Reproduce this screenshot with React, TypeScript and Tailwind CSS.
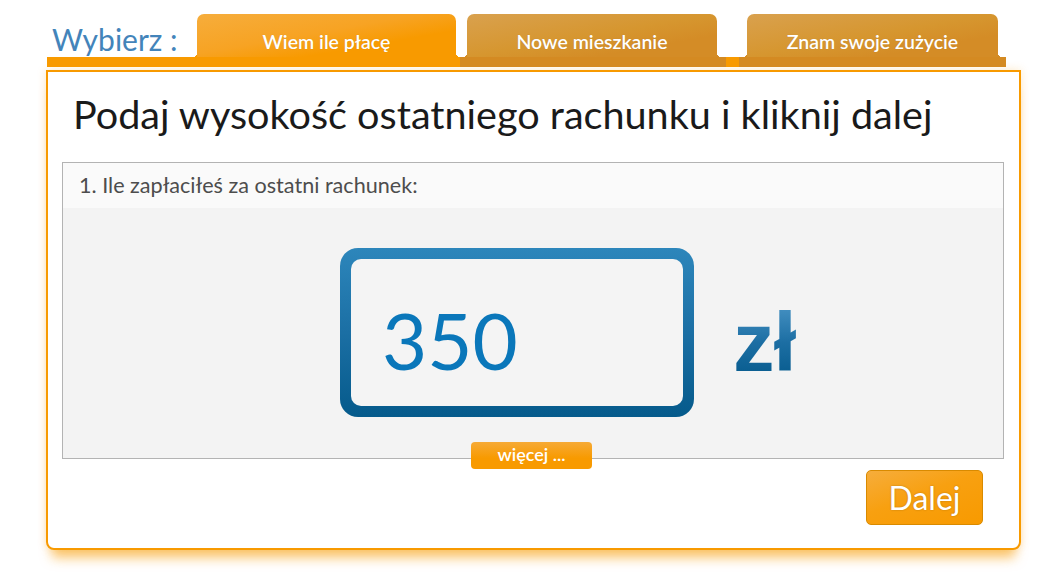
import React from "react";

const tabs = [
  { label: "Wiem ile płacę", active: true, width: "w-[259px]" },
  { label: "Nowe mieszkanie", active: false, width: "w-[250px]" },
  { label: "Znam swoje zużycie", active: false, width: "w-[251px]" },
];

function Tab({ label, active, width }: { label: string; active: boolean; width: string }) {
  return (
    <div
      className={`relative h-[43px] ${width} rounded-t-[7px] flex items-center justify-center text-white text-[19.5px] font-semibold ${
        active
          ? "bg-[linear-gradient(170deg,#f6ad3c_0%,#f7a323_45%,#f89a00_70%)]"
          : "bg-[linear-gradient(170deg,#d9a14e_0%,#d6962f_50%,#d48c26_75%)]"
      }`}
    >
      <span className="mt-[12px] [text-shadow:0_0_1px_rgba(0,0,0,0.15)]">{label}</span>
      {/* bottom flares */}
      <span
        className={`absolute bottom-0 left-[-4px] w-[4px] h-[4px] ${
          active
            ? "bg-[radial-gradient(circle_at_0_0,transparent_4px,#f89a00_4px)]"
            : "bg-[radial-gradient(circle_at_0_0,transparent_4px,#d48c26_4px)]"
        }`}
      />
      <span
        className={`absolute bottom-0 right-[-4px] w-[4px] h-[4px] ${
          active
            ? "bg-[radial-gradient(circle_at_100%_0,transparent_4px,#f89a00_4px)]"
            : "bg-[radial-gradient(circle_at_100%_0,transparent_4px,#d48c26_4px)]"
        }`}
      />
    </div>
  );
}

export default function App() {
  return (
    <div className="w-[1051px] h-[578px] bg-white overflow-hidden font-['Lato','Liberation_Sans',sans-serif]">
      {/* Tabs header */}
      <div className="pt-[14px] pl-[47px] flex items-end">
        <div className="w-[150px] h-[43px] pl-[5px] text-[30px] leading-none text-[#4384ba] flex items-end pb-[3px]">
          Wybierz :
        </div>
        <Tab {...tabs[0]} />
        <div className="w-[11px]" />
        <Tab {...tabs[1]} />
        <div className="w-[30px]" />
        <Tab {...tabs[2]} />
      </div>
      <div className="ml-[47px] flex h-[10px]">
        <div className="w-[413px] bg-[#f89a00]" />
        <div className="w-[266px] bg-[#d48a22]" />
        <div className="w-[13px] bg-[#f89a00]" />
        <div className="w-[267px] bg-[#d48a22]" />
      </div>

      {/* Main panel */}
      <div className="mt-[3px] ml-[46px] w-[975px] h-[480px] border-2 border-[#f89a00] rounded-b-[8px] bg-white shadow-[0_14px_12px_-6px_rgba(248,154,0,0.55),0_0_10px_rgba(248,154,0,0.22)] flex flex-col">
        <h1 className="pl-[25px] pt-[18px] text-[39.6px] leading-[48px] text-[#1a1a1a]">
          Podaj wysokość ostatniego rachunku i kliknij dalej
        </h1>

        <div className="relative mt-[24px] ml-[14px] mr-[15px] h-[297px] border border-[#b3b3b3] flex flex-col">
          <div className="h-[45px] bg-[#fafafa] pl-[16px] flex items-center text-[21.6px] text-[#4d4d4d]">
            1. Ile zapłaciłeś za ostatni rachunek:
          </div>
          <div className="flex-1 bg-[#f3f3f3] flex items-start pl-[277px] pt-[40px]">
            <div className="w-[354px] h-[169px] rounded-[18px] p-[11px] bg-[linear-gradient(180deg,#2d86bb_0%,#1b6fa4_50%,#055a8b_100%)]">
              <div className="w-full h-full rounded-[10px] bg-[#f4f4f4] flex items-center pl-[31px]">
                <span className="text-[78px] leading-none text-[#0a77ba] mt-[14px]">350</span>
              </div>
            </div>
            <span className="ml-[39px] mt-[53px] pr-[6px] font-['Liberation_Sans',sans-serif] font-bold text-[83px] leading-none tracking-[-1px] bg-[linear-gradient(180deg,#4a95c6_0%,#1c6ea3_50%,#03588a_100%)] bg-clip-text text-transparent">
              zł
            </span>
          </div>
          <button className="absolute left-[408px] top-[279px] w-[121px] h-[27px] rounded-[4px] bg-[linear-gradient(180deg,#f6aa36_0%,#f89a00_60%)] text-white text-[18px] font-semibold leading-none pb-[3px]">
            więcej ...
          </button>
        </div>

        <div className="flex justify-end pr-[36px] mt-[11px]">
          <button className="w-[117px] h-[55px] rounded-[5px] border border-[#d98a00] bg-[linear-gradient(160deg,#f6ad3c_0%,#f8a010_45%,#f89a00_100%)] text-white text-[32px] leading-none [text-shadow:0_0_2px_rgba(0,0,0,0.25)]">
            Dalej
          </button>
        </div>
      </div>
    </div>
  );
}
